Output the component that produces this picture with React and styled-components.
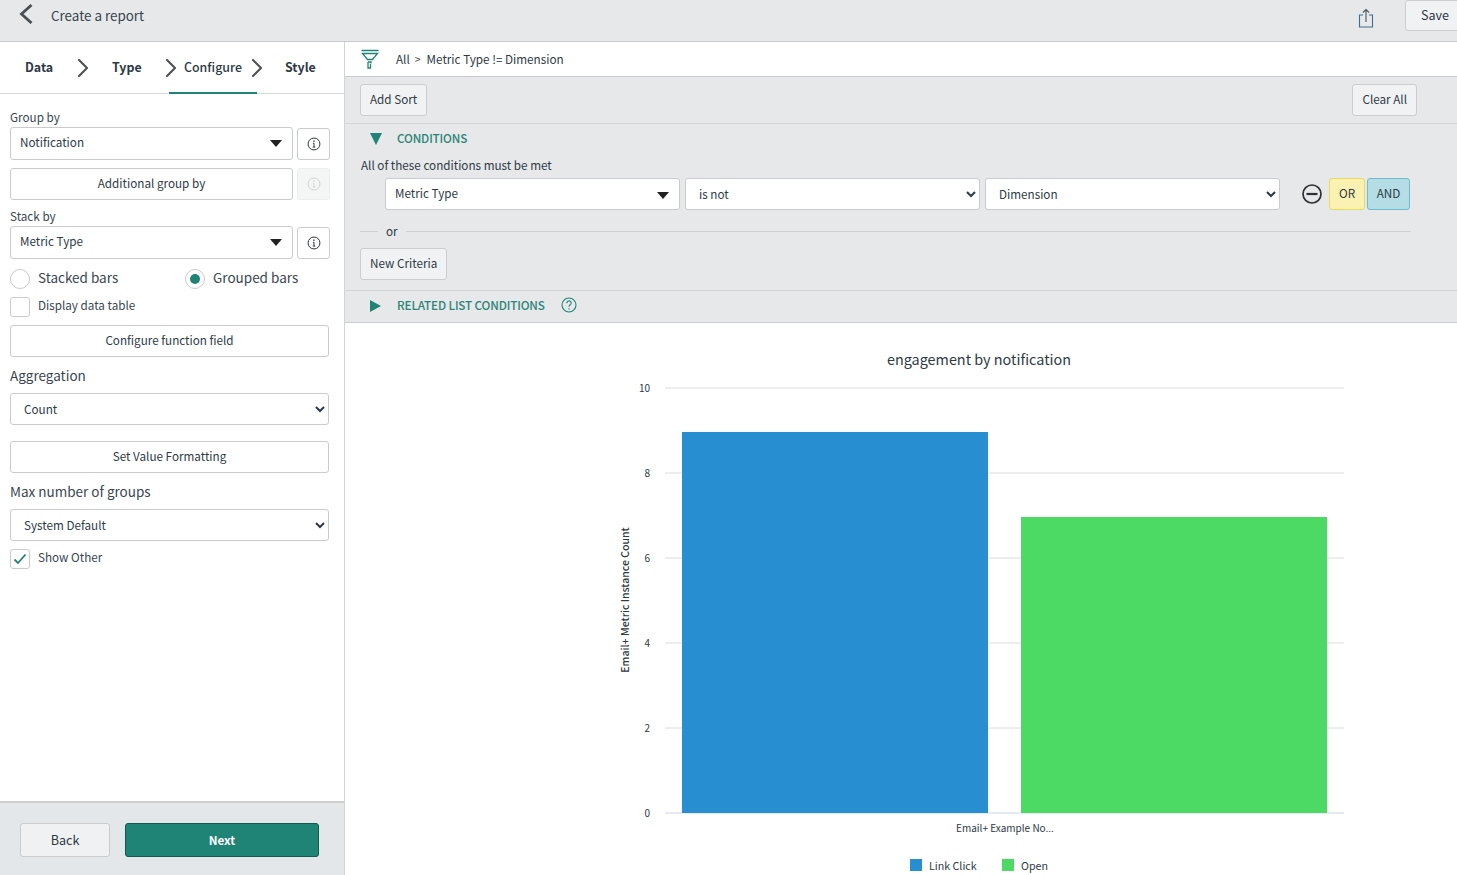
import React from "react";
import styled, { createGlobalStyle } from "styled-components";
import { ChevronRight } from "lucide-react";

const GlobalStyle = createGlobalStyle`
  html, body {
    margin: 0;
    height: 100%;
    overflow: hidden;
    background: #fff;
  }
  body, button, select {
    font-family: "Noto Sans CJK SC", "Noto Sans", sans-serif;
    font-size: 11.7px;
    line-height: 20px;
    color: #2e3a45;
  }
  * { box-sizing: border-box; }
`;

const Page = styled.div`
  width: 1457px;
  height: 875px;
  display: flex;
  flex-direction: column;
  overflow: hidden;
`;

const Header = styled.header`
  height: 42px;
  flex: none;
  display: flex;
  align-items: flex-start;
  background: #e6e8ea;
  border-bottom: 1px solid #c9cbcd;
`;

const BackLink = styled.div`
  display: flex;
  align-items: center;
  height: 32px;
  padding: 0 0 2px 19px;
  gap: 18px;
  font-size: 13.4px;
  color: #38434d;
`;

const BackChevron = styled.svg`
  width: 14px;
  height: 20px;
  flex: none;
  margin-top: -2px;
`;

const HeaderActions = styled.div`
  margin-left: auto;
  display: flex;
  align-items: flex-start;
  gap: 31px;
`;

const ShareIcon = styled.svg`
  width: 16px;
  height: 20px;
  margin-top: 8px;
`;

const SaveButton = styled.button`
  width: 56px;
  height: 31px;
  padding: 0 0 2px 15px;
  margin-right: -4px;
  font-size: 12.6px;
  background: #f1f2f4;
  border: 1px solid #cbcdcf;
  border-radius: 3px 0 0 3px;
  text-align: left;
`;

const Body = styled.div`
  flex: 1;
  min-height: 0;
  display: flex;
`;

const Sidebar = styled.aside`
  width: 345px;
  flex: none;
  display: flex;
  flex-direction: column;
  border-right: 1px solid #d3d4d6;
`;

const Tabs = styled.nav`
  height: 52px;
  flex: none;
  display: flex;
  align-items: center;
  padding-left: 25px;
  border-bottom: 1px solid #d6d7d9;
  position: relative;
`;

const Tab = styled.div`
  width: ${(p) => p.$w}px;
  font-weight: ${(p) => (p.$active ? 500 : 700)};
  font-size: 12.4px;
  white-space: nowrap;
  color: #2e3a45;
  padding-bottom: 1px;
  flex: none;
`;

const TabArrow = styled(ChevronRight)`
  width: 32px;
  height: 32px;
  flex: none;
  color: #4f5357;
  margin-right: ${(p) => p.$mr}px;
`;

const TabMark = styled.span`
  position: absolute;
  left: 169px;
  width: 88px;
  bottom: -1px;
  height: 2px;
  background: #1f8476;
`;

const Form = styled.div`
  flex: 1;
  padding: 15px 15px 0 10px;
  display: flex;
  flex-direction: column;
`;

const FieldLabel = styled.label`
  display: block;
  height: ${(p) => p.$h || 18}px;
  margin-top: ${(p) => p.$mt || 0}px;
  font-size: ${(p) => p.$size || 11.7}px;
  line-height: ${(p) => p.$lh || 15}px;
  color: #3a4651;
`;

const FieldRow = styled.div`
  display: flex;
  gap: 4px;
  margin-top: ${(p) => p.$mt || 0}px;
`;

const RefSelect = styled.div`
  width: 283px;
  height: 33px;
  flex: none;
  display: flex;
  align-items: center;
  padding: 0 10px 4px 9px;
  background: #fff;
  border: 1px solid #c9cbcd;
  border-radius: 3px;
  color: #2e3a45;
`;

const Caret = styled.span`
  margin-left: auto;
  margin-top: 4px;
  width: 0;
  height: 0;
  border-left: 6.5px solid transparent;
  border-right: 6.5px solid transparent;
  border-top: 7px solid #222;
`;

const InfoButton = styled.button`
  width: 33px;
  height: 32px;
  margin-top: ${(p) => (p.disabled ? 0 : 1)}px;
  flex: none;
  padding: 0;
  display: flex;
  align-items: center;
  justify-content: center;
  background: ${(p) => (p.disabled ? "#f4f5f5" : "#fff")};
  border: 1px solid ${(p) => (p.disabled ? "#eceded" : "#c9cbcd")};
  border-radius: 3px;
  color: ${(p) => (p.disabled ? "#cfd1d2" : "#2b2f33")};
`;

const PlainButton = styled.button`
  width: ${(p) => p.$w || 319}px;
  height: 32px;
  flex: none;
  padding: 0 0 2px;
  margin-top: ${(p) => p.$mt || 0}px;
  background: #fff;
  border: 1px solid #c9cbcd;
  border-radius: 3px;
  color: #2e3a45;
`;

const Select = styled.select`
  width: 319px;
  height: 32px;
  flex: none;
  padding: 0 0 2px 9px;
  margin: ${(p) => p.$mt || 0}px 0 0;
  background-color: #fff;
  border: 1px solid #c9cbcd;
  border-radius: 3px;
  color: #2e3a45;
`;

const OptionRow = styled.div`
  display: flex;
  align-items: center;
  height: 20px;
  margin-top: ${(p) => p.$mt || 0}px;
`;

const Option = styled.div`
  display: flex;
  align-items: flex-start;
  gap: 8px;
  width: ${(p) => p.$w || "auto"};
  font-size: ${(p) => p.$size || 11.7}px;
  line-height: ${(p) => p.$lh || 15}px;
  color: #3a4651;
`;

const Radio = styled.span`
  width: 20px;
  height: 20px;
  flex: none;
  display: flex;
  align-items: center;
  justify-content: center;
  background: #fff;
  border: 1px solid #c9cbcd;
  border-radius: 50%;
  &::after {
    content: "";
    display: ${(p) => (p.$on ? "block" : "none")};
    width: 10px;
    height: 10px;
    border-radius: 50%;
    background: #1f8476;
  }
`;

const Checkbox = styled.span`
  width: 20px;
  height: 20px;
  flex: none;
  display: flex;
  align-items: center;
  justify-content: center;
  background: #fff;
  border: 1px solid #c9cbcd;
  border-radius: 3px;
`;

const Footer = styled.footer`
  height: 74px;
  flex: none;
  display: flex;
  align-items: flex-start;
  gap: 15px;
  padding: 20px 0 0 20px;
  background: #e4e7ea;
  border-top: 2px solid #cfd0d2;
`;

const BackButton = styled.button`
  width: 90px;
  height: 34px;
  padding: 0 0 1px;
  font-size: 12.6px;
  background: #f0f1f3;
  border: 1px solid #c9cbcd;
  border-radius: 3px;
  color: #2e3a45;
`;

const NextButton = styled.button`
  width: 194px;
  height: 34px;
  padding: 0 0 1px;
  font-weight: 700;
  background: #1f8476;
  border: 1px solid #14594f;
  border-radius: 3px;
  color: #fff;
`;

const Main = styled.main`
  flex: 1;
  min-width: 0;
  display: flex;
  flex-direction: column;
`;

const Breadcrumb = styled.div`
  height: 35px;
  flex: none;
  display: flex;
  align-items: center;
  padding: 0 0 0 15px;
  background: #fff;
  border-bottom: 1px solid #c9cbcd;
`;

const FilterIcon = styled.svg`
  width: 22px;
  height: 22px;
  margin-right: 14px;
  flex: none;
`;

const Crumb = styled.span`
  margin-right: ${(p) => p.$mr || 5}px;
  font-size: ${(p) => p.$size || 11.7}px;
`;

const FilterPanel = styled.section`
  height: 246px;
  flex: none;
  display: flex;
  flex-direction: column;
  background: #e6e8ea;
  border-bottom: 1px solid #c9cbcd;
`;

const SortBar = styled.div`
  height: 47px;
  flex: none;
  display: flex;
  justify-content: space-between;
  padding: 7px 40px 0 15px;
  border-bottom: 1px solid #d3d5d7;
`;

const GreyButton = styled.button`
  height: 32px;
  padding: 0 9px 2px;
  margin-top: ${(p) => p.$mt || 0}px;
  margin-left: ${(p) => p.$ml || 0}px;
  align-self: flex-start;
  background: #f1f2f4;
  border: 1px solid #cbcdcf;
  border-radius: 3px;
  color: #2e3a45;
`;

const SectionHead = styled.div`
  display: flex;
  align-items: center;
  height: 30px;
  padding-left: 25px;
  flex: none;
`;

const Triangle = styled.span`
  width: 0;
  height: 0;
  flex: none;
  ${(p) =>
    p.$open
      ? `border-left: 6.5px solid transparent;
         border-right: 6.5px solid transparent;
         border-top: 12px solid #1f8476;
         margin-right: 15px;`
      : `border-top: 6.5px solid transparent;
         border-bottom: 6.5px solid transparent;
         border-left: 11px solid #1f8476;
         margin: 0 16px 2px 0;`}
`;

const SectionTitle = styled.span`
  font-weight: 500;
  letter-spacing: -0.14px;
  color: #2d8577;
  padding-bottom: 3px;
`;

const HelpIcon = styled.svg`
  width: 16px;
  height: 16px;
  margin-left: 16px;
  margin-bottom: 3px;
`;

const MetText = styled.div`
  height: 19px;
  margin-top: 2px;
  padding-left: 16px;
  line-height: 17px;
`;

const ConditionRow = styled.div`
  display: flex;
  align-items: flex-start;
  gap: 5px;
  margin-top: 3px;
  padding-left: 40px;
  height: 32px;
  flex: none;
`;

const ConditionField = styled(RefSelect)`
  width: 295px;
  height: 32px;
  padding-bottom: 2px;
`;

const ConditionSelect = styled(Select)`
  width: 295px;
  padding-left: 9px;
`;

const RemoveIcon = styled.svg`
  width: 22px;
  height: 22px;
  margin: 5px 1px 0 16px;
  flex: none;
`;

const LogicGroup = styled.div`
  display: flex;
  gap: 2px;
`;

const LogicButton = styled.button`
  width: ${(p) => p.$w}px;
  height: 32px;
  padding: 0 0 2px;
  background: ${(p) => p.$bg};
  border: 1px solid ${(p) => p.$line};
  border-radius: 3px;
  color: #2e3a45;
`;

const OrDivider = styled.div`
  display: flex;
  align-items: center;
  width: 1051px;
  height: 20px;
  margin: 11px 0 0 15px;
  flex: none;
  &::before, &::after {
    content: "";
    height: 1px;
    background: #cfd1d3;
  }
  &::before { width: 18px; }
  &::after { flex: 1; }
  span { padding: 0 8px; margin-bottom: 1px; }
`;

const RelatedBar = styled(SectionHead)`
  height: 32px;
  margin-top: 10px;
  border-top: 1px solid #d3d5d7;
`;

const ChartArea = styled.div`
  flex: 1;
  min-height: 0;
  background: #fff;
`;

const ChartSvg = styled.svg`
  display: block;
  width: 1112px;
  height: 552px;
  text {
    font-family: "Noto Sans CJK SC", "Noto Sans", sans-serif;
    fill: #2e3a45;
  }
`;

const InfoGlyph = ({ size = 14 }) => (
  <svg width={size} height={size} viewBox="0 0 16 16" fill="none" stroke="currentColor" strokeWidth="1.1">
    <circle cx="8" cy="8" r="6.8" />
    <path d="M8 7.200v4.200M6.600 11.500h2.800M6.800 7.200h1.200" />
    <circle cx="8" cy="4.700" r="0.4" fill="currentColor" />
  </svg>
);

const ticks = [10, 8, 6, 4, 2, 0];

const Chart = () => (
  <ChartSvg viewBox="345 323 1112 552">
    <text x="979" y="365" fontSize="14.4" textAnchor="middle">engagement by notification</text>
    {ticks.map((t, i) => (
      <g key={t}>
        <line x1="665" x2="1344" y1={388 + i * 85} y2={388 + i * 85} stroke={t === 0 ? "#ccd3e3" : "#dcdcdc"} />
        <text x="650" y={392 + i * 85} fontSize="10" textAnchor="end">{t}</text>
      </g>
    ))}
    <rect x="682" y="432" width="306" height="381" fill="#278ed1" />
    <rect x="1021" y="517" width="306" height="296" fill="#4cd964" />
    <text x="629" y="600" fontSize="10.5" fontWeight="500" textAnchor="middle" transform="rotate(-90 629 600)">
      Email+ Metric Instance Count
    </text>
    <text x="1005" y="832" fontSize="10" textAnchor="middle">Email+ Example No...</text>
    <rect x="910" y="859" width="12" height="12" fill="#278ed1" />
    <text x="929" y="870" fontSize="10.7">Link Click</text>
    <rect x="1002" y="859" width="12" height="12" fill="#4cd964" />
    <text x="1021" y="870" fontSize="10.7">Open</text>
  </ChartSvg>
);

export default function App() {
  return (
    <Page>
      <GlobalStyle />
      <Header>
        <BackLink>
          <BackChevron viewBox="0 0 14 20" fill="none" stroke="#4a4f54" strokeWidth="2.8">
            <path d="M12.500 1L2.500 10l10 9" />
          </BackChevron>
          Create a report
        </BackLink>
        <HeaderActions>
          <ShareIcon viewBox="0 0 16 20" fill="none" stroke="#4a5560" strokeWidth="1.1">
            <path d="M5 7H1.500v12h13V7H11" stroke="#3f6d8f" />
            <path d="M8 14V1.500M5 4.500l3-3 3 3" />
          </ShareIcon>
          <SaveButton>Save</SaveButton>
        </HeaderActions>
      </Header>
      <Body>
        <Sidebar>
          <Tabs>
            <Tab $w={42}>Data</Tab>
            <TabArrow $mr={13} strokeWidth={1.6} />
            <Tab $w={43}>Type</Tab>
            <TabArrow $mr={-3} strokeWidth={1.6} />
            <Tab $active $w={57}>Configure</Tab>
            <TabArrow $mr={12} strokeWidth={1.6} />
            <Tab $w={40}>Style</Tab>
            <TabMark />
          </Tabs>
          <Form>
            <FieldLabel>Group by</FieldLabel>
            <FieldRow>
              <RefSelect>Notification<Caret /></RefSelect>
              <InfoButton><InfoGlyph /></InfoButton>
            </FieldRow>
            <FieldRow $mt={8}>
              <PlainButton $w={283}>Additional group by</PlainButton>
              <InfoButton disabled><InfoGlyph /></InfoButton>
            </FieldRow>
            <FieldLabel $mt={8}>Stack by</FieldLabel>
            <FieldRow>
              <RefSelect>Metric Type<Caret /></RefSelect>
              <InfoButton><InfoGlyph /></InfoButton>
            </FieldRow>
            <OptionRow $mt={10}>
              <Option $w="175px" $size={13.5} $lh={17}><Radio />Stacked bars</Option>
              <Option $size={13.5} $lh={17}><Radio $on />Grouped bars</Option>
            </OptionRow>
            <OptionRow $mt={8}>
              <Option><Checkbox />Display data table</Option>
            </OptionRow>
            <PlainButton $mt={8}>Configure function field</PlainButton>
            <FieldLabel $mt={9} $h={27} $size={13.5} $lh={19}>Aggregation</FieldLabel>
            <Select defaultValue="Count"><option>Count</option></Select>
            <PlainButton $mt={16}>Set Value Formatting</PlainButton>
            <FieldLabel $mt={9} $h={27} $size={13.5} $lh={19}>Max number of groups</FieldLabel>
            <Select defaultValue="System Default"><option>System Default</option></Select>
            <OptionRow $mt={8}>
              <Option>
                <Checkbox>
                  <svg width="14" height="12" viewBox="0 0 14 12" fill="none" stroke="#1f8476" strokeWidth="1.8">
                    <path d="M1.500 6.500L5 10l7.500-8.500" />
                  </svg>
                </Checkbox>
                Show Other
              </Option>
            </OptionRow>
          </Form>
          <Footer>
            <BackButton>Back</BackButton>
            <NextButton>Next</NextButton>
          </Footer>
        </Sidebar>
        <Main>
          <Breadcrumb>
            <FilterIcon viewBox="0 0 22 22" fill="none" stroke="#1f8476" strokeWidth="1.3">
              <path d="M1.500 2.500h17M2.500 5.500h15l-5 6h-5zM8 14h3v1.500M8 14v6h2.500v-4" />
            </FilterIcon>
            <Crumb>All</Crumb>
            <Crumb $size={10.5} $mr={6}>&gt;</Crumb>
            <Crumb>Metric Type != Dimension</Crumb>
          </Breadcrumb>
          <FilterPanel>
            <SortBar>
              <GreyButton>Add Sort</GreyButton>
              <GreyButton>Clear All</GreyButton>
            </SortBar>
            <SectionHead>
              <Triangle $open />
              <SectionTitle>CONDITIONS</SectionTitle>
            </SectionHead>
            <MetText>All of these conditions must be met</MetText>
            <ConditionRow>
              <ConditionField>Metric Type<Caret /></ConditionField>
              <ConditionSelect defaultValue="is not"><option>is not</option></ConditionSelect>
              <ConditionSelect defaultValue="Dimension"><option>Dimension</option></ConditionSelect>
              <RemoveIcon viewBox="0 0 22 22" fill="none" stroke="#2b2f33" strokeWidth="1.7">
                <circle cx="11" cy="11" r="9" />
                <path d="M5.500 11h11" strokeWidth="2.2" />
              </RemoveIcon>
              <LogicGroup>
                <LogicButton $w={36} $bg="#fbf1b0" $line="#ecd95f">OR</LogicButton>
                <LogicButton $w={43} $bg="#b4dde6" $line="#6dbdd2">AND</LogicButton>
              </LogicGroup>
            </ConditionRow>
            <OrDivider><span>or</span></OrDivider>
            <GreyButton $mt={7} $ml={15}>New Criteria</GreyButton>
            <RelatedBar>
              <Triangle />
              <SectionTitle>RELATED LIST CONDITIONS</SectionTitle>
              <HelpIcon viewBox="0 0 16 16" fill="none" stroke="#1f8476" strokeWidth="1.1">
                <circle cx="8" cy="8" r="7" />
                <path d="M5.800 6.200c0-3 4.400-3 4.400-.2 0 1.800-2.200 1.700-2.200 3.700M8 11.200v1.200" />
              </HelpIcon>
            </RelatedBar>
          </FilterPanel>
          <ChartArea><Chart /></ChartArea>
        </Main>
      </Body>
    </Page>
  );
}
